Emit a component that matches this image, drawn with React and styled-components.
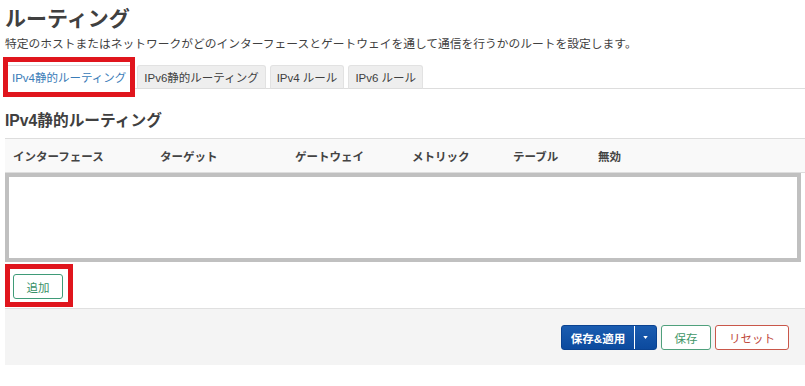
import React from "react";
import styled, { createGlobalStyle } from "styled-components";

const GlobalStyle = createGlobalStyle`
  body {
    margin: 0;
    background: #ffffff;
    font-family: "Liberation Sans", "Noto Sans CJK JP", sans-serif;
    color: #404040;
  }
`;

const Page = styled.div`
  width: 800px;
  padding: 5px 0 0 5px;
`;

const Title = styled.h2`
  margin: 0;
  font-size: 21px;
  line-height: 28px;
  font-weight: bold;
  color: #404040;
`;

const Description = styled.p`
  margin: 3px 0 0;
  font-size: 11.75px;
  line-height: 16px;
  color: #404040;
  white-space: nowrap;
`;

const TabList = styled.ul`
  display: flex;
  gap: 4px;
  list-style: none;
  margin: 13px 0 0;
  padding: 0;
  border-bottom: 1px solid #dddddd;
`;

const Tab = styled.li`
  position: relative;
  height: 22px;
  padding: 0 6px;
  margin-bottom: -1px;
  display: flex;
  align-items: center;
  font-size: 11.5px;
  border: 1px solid ${(p) => (p.$active ? "#dddddd" : "#e2e2e2")};
  border-bottom-color: ${(p) => (p.$active ? "#ffffff" : "#dddddd")};
  border-radius: 3px 3px 0 0;
  background: ${(p) => (p.$active ? "#ffffff" : "#eeeeee")};
  color: ${(p) => (p.$active ? "#3a7cb8" : "#404040")};
  white-space: nowrap;
`;

const Marker = styled.span`
  position: absolute;
  top: ${(p) => p.$t}px;
  left: ${(p) => p.$l}px;
  right: ${(p) => p.$r}px;
  bottom: ${(p) => p.$b}px;
  border: 5px solid #e0151d;
  pointer-events: none;
`;

const SectionTitle = styled.h3`
  margin: 22px 0 0;
  font-size: 15.7px;
  line-height: 20px;
  font-weight: bold;
  color: #404040;
`;

const Table = styled.div`
  margin-top: 7px;
  border-top: 1px solid #dddddd;
`;

const HeaderRow = styled.div`
  display: grid;
  grid-template-columns: 147px 135px 117px 101px 85px 1fr;
  height: 33px;
  align-items: center;
  background: #f9f9f9;
  border-bottom: 1px solid #dddddd;
`;

const HeaderCell = styled.div`
  padding-left: 8px;
  font-size: 11.5px;
  font-weight: bold;
  color: #444444;
  white-space: nowrap;
`;

const EmptyBody = styled.div`
  width: 796px;
  height: 89px;
  box-sizing: border-box;
  border: 4px solid #c0c0c0;
  background: #ffffff;
`;

const AddRow = styled.div`
  padding: 12px 0 9px 8px;
`;

const OutlineButton = styled.button`
  position: relative;
  height: 25px;
  width: ${(p) => p.$w}px;
  padding: 0;
  border: 1px solid ${(p) => p.$color};
  border-radius: 3px;
  background: #ffffff;
  color: ${(p) => p.$text};
  font-family: inherit;
  font-size: 11.5px;
`;

const Footer = styled.div`
  display: flex;
  justify-content: flex-end;
  gap: 4px;
  padding: 16px 16px 15px 0;
  background: #f4f4f4;
  border-top: 1px solid #e0e0e0;
`;

const SplitButton = styled.div`
  display: flex;
  height: 25px;
  border-radius: 3px;
  overflow: hidden;
  background: linear-gradient(#1a5cb0, #0c4a9e);
  border: 1px solid #0a4290;
  box-sizing: border-box;
`;

const SplitMain = styled.button`
  width: 73px;
  padding: 0;
  border: none;
  border-right: 1px solid #ffffff;
  background: transparent;
  color: #ffffff;
  font-family: inherit;
  font-size: 11.5px;
  font-weight: bold;
`;

const SplitCaret = styled.button`
  width: 21px;
  padding: 0;
  border: none;
  background: transparent;
  display: flex;
  align-items: center;
  justify-content: center;
`;

const columns = ["インターフェース", "ターゲット", "ゲートウェイ", "メトリック", "テーブル", "無効"];

export default function App() {
  return (
    <>
      <GlobalStyle />
      <Page>
        <Title>ルーティング</Title>
        <Description>
          特定のホストまたはネットワークがどのインターフェースとゲートウェイを通して通信を行うかのルートを設定します。
        </Description>
        <TabList>
          <Tab $active>
            IPv4静的ルーティング
            <Marker $t={-9} $l={-3} $r={-3} $b={-9} />
          </Tab>
          <Tab>IPv6静的ルーティング</Tab>
          <Tab>IPv4 ルール</Tab>
          <Tab>IPv6 ルール</Tab>
        </TabList>
        <SectionTitle>IPv4静的ルーティング</SectionTitle>
        <Table>
          <HeaderRow>
            {columns.map((c) => (
              <HeaderCell key={c}>{c}</HeaderCell>
            ))}
          </HeaderRow>
          <EmptyBody />
        </Table>
        <AddRow>
          <OutlineButton $w={50} $color="#3f9b78" $text="#3a9168">
            追加
            <Marker $t={-11} $l={-9} $r={-11} $b={-9} />
          </OutlineButton>
        </AddRow>
        <Footer>
          <SplitButton>
            <SplitMain>保存&amp;適用</SplitMain>
            <SplitCaret>
              <svg width="5" height="3" viewBox="0 0 6 4">
                <path d="M0 0h6L3 4z" fill="#ffffff" />
              </svg>
            </SplitCaret>
          </SplitButton>
          <OutlineButton $w={50} $color="#4fa07c" $text="#3f9668">
            保存
          </OutlineButton>
          <OutlineButton $w={74} $color="#c9574a" $text="#c04a3c">
            リセット
          </OutlineButton>
        </Footer>
      </Page>
    </>
  );
}
